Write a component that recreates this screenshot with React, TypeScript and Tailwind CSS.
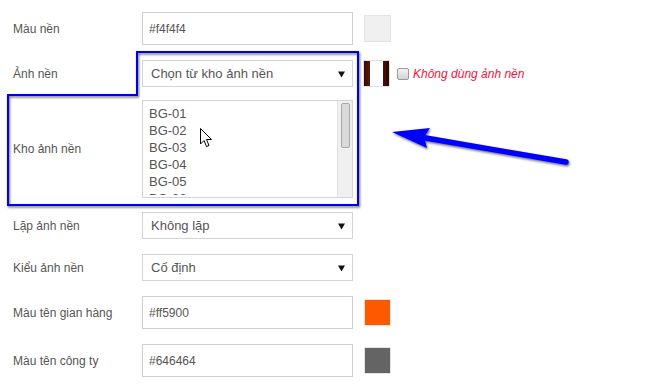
import React from "react";

const labelCls = "w-[129px] shrink-0 text-[12px] text-[#555]";

const Caret = () => (
  <svg width="7" height="7" viewBox="0 0 7 7" className="absolute right-[7px] top-1/2 -translate-y-1/2">
    <polygon points="0,1 7,1 3.5,7" fill="#111" />
  </svg>
);

const Select = ({ value }: { value: string }) => (
  <div className="relative flex h-[27px] w-[211px] items-center border border-[#d4d4d4] bg-white pl-[8px] text-[13px] text-[#555]">
    {value}
    <Caret />
  </div>
);

const ColorInput = ({ value, swatch }: { value: string; swatch: string }) => (
  <>
    <div className="flex h-[33px] w-[211px] items-center border border-[#cfcfcf] bg-white pl-[6px] text-[12px] text-[#555]">
      {value}
    </div>
    <div className="ml-[11px] h-[27px] w-[27px] border border-[#e4e4e4]" style={{ background: swatch }} />
  </>
);

const items = ["BG-01", "BG-02", "BG-03", "BG-04", "BG-05", "BG-06", "BG-07"];

export default function App() {
  return (
    <div className="relative h-[390px] w-[670px] overflow-hidden bg-white font-['Liberation_Sans',Arial,sans-serif]">
      <div className="flex flex-col pl-[13px]">
        <div className="mt-[12px] flex items-center">
          <div className={labelCls}>Màu nền</div>
          <ColorInput value="#f4f4f4" swatch="#f0f0f0" />
        </div>

        <div className="mt-[15px] flex items-center">
          <div className={labelCls}>Ảnh nền</div>
          <Select value="Chọn từ kho ảnh nền" />
          <div className="ml-[10px] flex h-[27px] w-[27px] border border-[#e0e0e0]">
            <div className="w-[6px] bg-gradient-to-r from-[#3a0a04] to-[#5a1a0c]" />
            <div className="flex-1 bg-white" />
            <div className="w-[6px] bg-gradient-to-r from-[#4a1208] to-[#2a0603]" />
          </div>
          <div className="ml-[7px] h-[12px] w-[12px] rounded-[2px] border border-[#9a9a9a] bg-gradient-to-b from-[#f4f4f4] to-[#d4d4d4]" />
          <div className="ml-[4px] text-[12px] italic text-[#f0143c]">Không dùng ảnh nền</div>
        </div>

        <div className="mt-[13px] flex items-center">
          <div className={labelCls}>Kho ảnh nền</div>
          <div className="flex h-[98px] w-[211px] border border-[#d4d4d4] bg-white">
            <div className="mt-[4px] h-[90px] flex-1 overflow-hidden pl-[6px] text-[13px] leading-[17px] text-[#555]">
              {items.map((it) => (
                <div key={it}>{it}</div>
              ))}
            </div>
            <div className="w-[15px] border-l border-[#e2e2e2] bg-[#f0f0f0] px-[3px] pt-[2px]">
              <div className="h-[45px] w-[9px] rounded-[2px] border border-[#a6a6a6] bg-[#dadada]" />
            </div>
          </div>
        </div>

        <div className="mt-[14px] flex items-center">
          <div className={labelCls}>Lặp ảnh nền</div>
          <Select value="Không lặp" />
        </div>

        <div className="mt-[15px] flex items-center">
          <div className={labelCls}>Kiểu ảnh nền</div>
          <Select value="Cố định" />
        </div>

        <div className="mt-[15px] flex items-center">
          <div className={labelCls}>Màu tên gian hàng</div>
          <ColorInput value="#ff5900" swatch="#ff5900" />
        </div>

        <div className="mt-[15px] flex items-center">
          <div className={labelCls}>Màu tên công ty</div>
          <ColorInput value="#646464" swatch="#646464" />
        </div>
      </div>

      {/* annotation overlay */}
      <svg className="pointer-events-none absolute left-0 top-0" width="670" height="390">
        <defs>
          <filter id="sh" x="-10%" y="-10%" width="120%" height="130%">
            <feDropShadow dx="1" dy="1.5" stdDeviation="0.8" floodColor="#000" floodOpacity="0.6" />
          </filter>
        </defs>
        <polygon
          points="137,52 358,52 358,205 8,205 8,95 137,95"
          fill="none"
          stroke="#0000e6"
          strokeWidth="2"
          filter="url(#sh)"
        />
        <g filter="url(#sh)">
          <line x1="566" y1="162" x2="420" y2="137" stroke="#0000ff" strokeWidth="5.5" strokeLinecap="round" />
          <polygon points="392,132 430,128 424,137 427,148" fill="#0000ff" />
        </g>
        {/* mouse cursor */}
        <path
          d="M200.5 128.5 L200.5 144 L204 140.5 L206.5 146.5 L209 145.5 L206.5 139.5 L211.5 139.5 Z"
          fill="#fff"
          stroke="#000"
          strokeWidth="1"
          strokeLinejoin="round"
        />
      </svg>
    </div>
  );
}
